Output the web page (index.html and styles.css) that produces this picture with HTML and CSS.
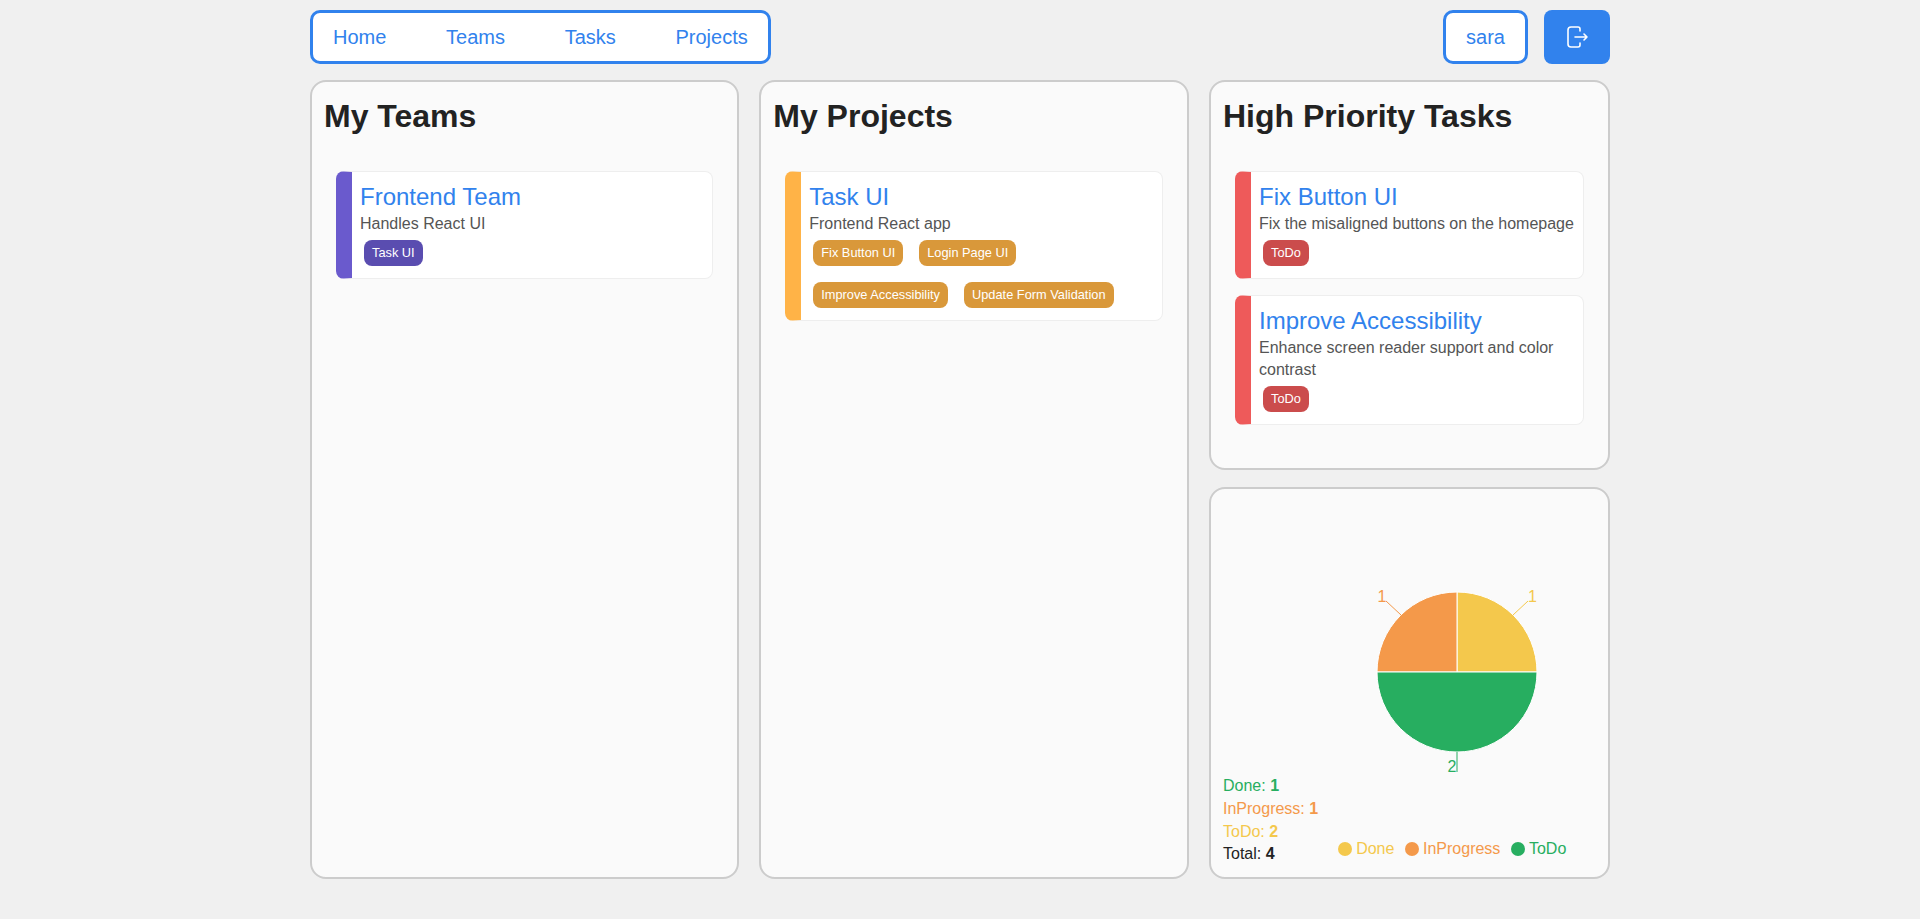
FILE: index.html
```html
<!DOCTYPE html>
<html lang="en">
<head>
    <meta charset="UTF-8">
    <meta name="viewport" content="width=device-width, initial-scale=1.0">
    <title>Task UI</title>
    <link rel="stylesheet" href="styles.css">
</head>
<body>
    <div class="page">
        <div class="header">
            <nav class="nav">
                <a href="#">Home</a>
                <a href="#">Teams</a>
                <a href="#">Tasks</a>
                <a href="#">Projects</a>
            </nav>
            <div class="user-area">
                <div class="username">sara</div>
                <button class="logout" aria-label="Log out">
                    <svg width="24" height="24" viewBox="0 0 24 24" fill="none" stroke="#fff" stroke-width="1.6" stroke-linecap="round" stroke-linejoin="round">
                        <path d="M15 6V4a2 2 0 0 0-2-2H6a3 3 0 0 0-3 3v14a3 3 0 0 0 3 3h7a2 2 0 0 0 2-2v-2"></path>
                        <path d="M10 12h12M19 9l3 3-3 3"></path>
                    </svg>
                </button>
            </div>
        </div>

        <div class="board">
            <section class="panel">
                <h2>My Teams</h2>
                <div class="card-list">
                    <div class="card card-team">
                        <h3>Frontend Team</h3>
                        <p>Handles React UI</p>
                        <div class="chips">
                            <span class="chip">Task UI</span>
                        </div>
                    </div>
                </div>
            </section>

            <section class="panel">
                <h2>My Projects</h2>
                <div class="card-list">
                    <div class="card card-project">
                        <h3>Task UI</h3>
                        <p>Frontend React app</p>
                        <div class="chips">
                            <span class="chip">Fix Button UI</span>
                            <span class="chip">Login Page UI</span>
                            <span class="chip">Improve Accessibility</span>
                            <span class="chip">Update Form Validation</span>
                        </div>
                    </div>
                </div>
            </section>

            <div class="side">
                <section class="panel panel-tasks">
                    <h2>High Priority Tasks</h2>
                    <div class="card-list">
                        <div class="card card-task">
                            <h3>Fix Button UI</h3>
                            <p>Fix the misaligned buttons on the homepage</p>
                            <div class="chips">
                                <span class="chip">ToDo</span>
                            </div>
                        </div>
                        <div class="card card-task">
                            <h3>Improve Accessibility</h3>
                            <p>Enhance screen reader support and color contrast</p>
                            <div class="chips">
                                <span class="chip">ToDo</span>
                            </div>
                        </div>
                    </div>
                </section>

                <section class="panel panel-chart">
                    <div class="stats">
                        <div class="stat-done">Done: <b>1</b></div>
                        <div class="stat-progress">InProgress: <b>1</b></div>
                        <div class="stat-todo">ToDo: <b>2</b></div>
                        <div class="stat-total">Total: <b>4</b></div>
                    </div>
                    <div class="chart">
                        <svg class="pie" width="278" height="200" viewBox="0 0 278 200">
                            <path d="M140 90V10A80 80 0 0 1 220 90Z" fill="#f4c84c" stroke="#fff"></path>
                            <path d="M140 90H60A80 80 0 0 1 140 10Z" fill="#f4994a" stroke="#fff"></path>
                            <path d="M140 90H220A80 80 0 0 1 60 90Z" fill="#27ae60" stroke="#fff"></path>
                            <path d="M196 33L211 19" stroke="#f4c84c" fill="none"></path>
                            <path d="M84 33L69 19" stroke="#f4994a" fill="none"></path>
                            <path d="M140 170V190" stroke="#27ae60" fill="none"></path>
                            <text x="215.5" y="20" text-anchor="middle" fill="#f4c84c">1</text>
                            <text x="65" y="20" text-anchor="middle" fill="#f4994a">1</text>
                            <text x="135" y="190" text-anchor="middle" fill="#27ae60">2</text>
                        </svg>
                        <ul class="legend">
                            <li class="legend-done"><i></i>Done</li>
                            <li class="legend-progress"><i></i>InProgress</li>
                            <li class="legend-todo"><i></i>ToDo</li>
                        </ul>
                    </div>
                </section>
            </div>
        </div>
    </div>
</body>
</html>
```

FILE: styles.css
```css
* {
    margin: 0;
    padding: 0;
    box-sizing: border-box;
}
body {
    font-family: "Liberation Sans", Arial, sans-serif;
    background-color: #f0f0f0;
    color: #222;
}
.page {
    width: 1300px;
    margin: 0 auto;
    padding-top: 10px;
}
.header {
    display: flex;
    justify-content: space-between;
    height: 54px;
    margin-bottom: 16px;
}
.nav {
    display: flex;
    align-items: center;
    gap: 59.7px;
    padding: 0 20px;
    background: white;
    border: 3px solid #3182ed;
    border-radius: 10px;
}
.nav a {
    color: #3182ed;
    font-size: 20px;
    text-decoration: none;
}
.user-area {
    display: flex;
    gap: 16px;
}
.username {
    display: flex;
    align-items: center;
    justify-content: center;
    width: 85px;
    background: white;
    border: 3px solid #3182ed;
    border-radius: 10px;
    color: #3182ed;
    font-size: 20px;
}
.logout {
    display: flex;
    align-items: center;
    justify-content: center;
    width: 66px;
    background-color: #3182ed;
    border: none;
    border-radius: 8px;
}
.board {
    display: grid;
    grid-template-columns: 429px 429.5px 400.5px;
    gap: 20.25px;
    height: 799px;
}
.panel {
    background: #fafafa;
    border: 2px solid #ccc;
    border-radius: 16px;
    padding: 16px 12px;
}
.panel h2 {
    font-size: 32px;
    line-height: 37px;
    color: #222;
}
.card-list {
    display: flex;
    flex-direction: column;
    gap: 16px;
    padding: 36px 12px 0;
}
.card {
    background: white;
    border: 1px solid #eee;
    border-left: 16px solid;
    border-radius: 8px;
    padding: 10px 7px 12px 8px;
}
.card h3 {
    font-size: 24px;
    font-weight: normal;
    line-height: 29px;
    margin-bottom: 2px;
    color: #3182ed;
}
.card p {
    font-size: 16px;
    line-height: 22.4px;
    color: #555;
}
.chips {
    display: flex;
    flex-wrap: wrap;
    gap: 16px;
    padding: 4.6px 4px 0;
}
.chip {
    color: white;
    font-size: 12.8px;
    font-weight: 500;
    line-height: 26px;
    padding: 0 8px;
    border-radius: 8px;
}
.card-team { border-left-color: #6a5acd; }
.card-team .chip { background-color: #5a4db0; }
.card-project { border-left-color: #ffb347; }
.card-project .chip { background-color: #d9983a; }
.card-task { border-left-color: #ee5a5a; }
.card-task .chip { background-color: #cb4c4c; }
.side {
    display: flex;
    flex-direction: column;
    gap: 17px;
}
.panel-tasks {
    height: 390px;
}
.panel-chart {
    flex: 1;
    display: flex;
    align-items: flex-end;
    padding: 16px 12px 11px;
}
.stats {
    width: 94px;
    font-size: 16px;
    line-height: 22.7px;
    white-space: nowrap;
}
.stat-done { color: #27ae60; }
.stat-progress { color: #f4994a; }
.stat-todo { color: #f4c84c; }
.stat-total { color: #222; }
.chart {
    flex: 1;
}
.pie {
    display: block;
    font-size: 16px;
}
.legend {
    display: flex;
    justify-content: center;
    gap: 10.6px;
    list-style: none;
    font-size: 16px;
    line-height: 20px;
    margin: 57px 0 7px;
    padding: 0 8px 0 0;
}
.legend li {
    display: flex;
    align-items: center;
    gap: 4px;
}
.legend i {
    width: 14px;
    height: 14px;
    border-radius: 50%;
    background: currentColor;
}
.legend-done { color: #f4c84c; }
.legend-progress { color: #f4994a; }
.legend-todo { color: #27ae60; }
```
